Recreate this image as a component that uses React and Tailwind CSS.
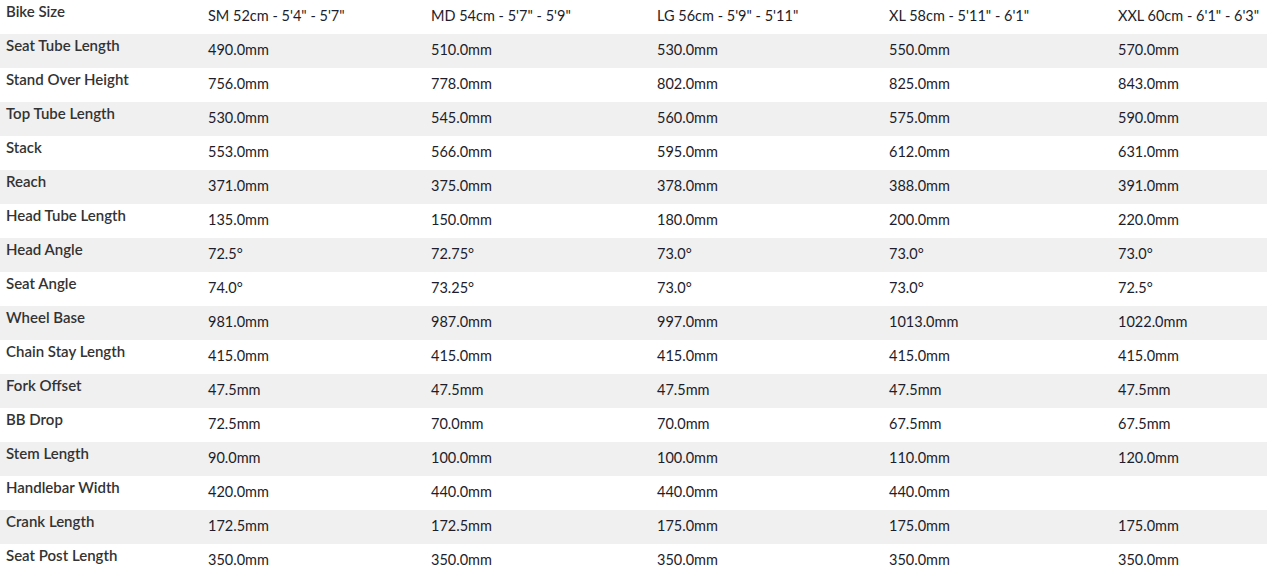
const sizes = [
  "SM 52cm - 5'4\" - 5'7\"",
  "MD 54cm - 5'7\" - 5'9\"",
  "LG 56cm - 5'9\" - 5'11\"",
  "XL 58cm - 5'11\" - 6'1\"",
  "XXL 60cm - 6'1\" - 6'3\"",
];

const rows = [
  ["Seat Tube Length", "490.0mm", "510.0mm", "530.0mm", "550.0mm", "570.0mm"],
  ["Stand Over Height", "756.0mm", "778.0mm", "802.0mm", "825.0mm", "843.0mm"],
  ["Top Tube Length", "530.0mm", "545.0mm", "560.0mm", "575.0mm", "590.0mm"],
  ["Stack", "553.0mm", "566.0mm", "595.0mm", "612.0mm", "631.0mm"],
  ["Reach", "371.0mm", "375.0mm", "378.0mm", "388.0mm", "391.0mm"],
  ["Head Tube Length", "135.0mm", "150.0mm", "180.0mm", "200.0mm", "220.0mm"],
  ["Head Angle", "72.5°", "72.75°", "73.0°", "73.0°", "73.0°"],
  ["Seat Angle", "74.0°", "73.25°", "73.0°", "73.0°", "72.5°"],
  ["Wheel Base", "981.0mm", "987.0mm", "997.0mm", "1013.0mm", "1022.0mm"],
  ["Chain Stay Length", "415.0mm", "415.0mm", "415.0mm", "415.0mm", "415.0mm"],
  ["Fork Offset", "47.5mm", "47.5mm", "47.5mm", "47.5mm", "47.5mm"],
  ["BB Drop", "72.5mm", "70.0mm", "70.0mm", "67.5mm", "67.5mm"],
  ["Stem Length", "90.0mm", "100.0mm", "100.0mm", "110.0mm", "120.0mm"],
  ["Handlebar Width", "420.0mm", "440.0mm", "440.0mm", "440.0mm", ""],
  ["Crank Length", "172.5mm", "172.5mm", "175.0mm", "175.0mm", "175.0mm"],
  ["Seat Post Length", "350.0mm", "350.0mm", "350.0mm", "350.0mm", "350.0mm"],
];

function Row({ label, values, shaded }) {
  return (
    <div
      className={`grid h-[34px] grid-cols-[202px_223px_226px_232px_229px_1fr] ${
        shaded ? "bg-[#f0f0f0]" : "bg-white"
      }`}
    >
      <div className="pl-[6px] pt-[1px] text-[15px] leading-[20px] font-semibold text-[#333333]">
        {label}
      </div>
      {values.map((value, i) => (
        <div
          key={i}
          className="pl-[6px] pt-[6px] text-[14.5px] leading-[20px] text-[#1d1d2b] whitespace-nowrap"
        >
          {value}
        </div>
      ))}
    </div>
  );
}

export default function App() {
  return (
    <div
      className="h-[573px] w-[1267px] overflow-hidden bg-white"
      style={{ fontFamily: "Lato, 'Open Sans', sans-serif" }}
    >
      <Row label="Bike Size" values={sizes} shaded={false} />
      {rows.map(([label, ...values], i) => (
        <Row key={label} label={label} values={values} shaded={i % 2 === 0} />
      ))}
    </div>
  );
}
